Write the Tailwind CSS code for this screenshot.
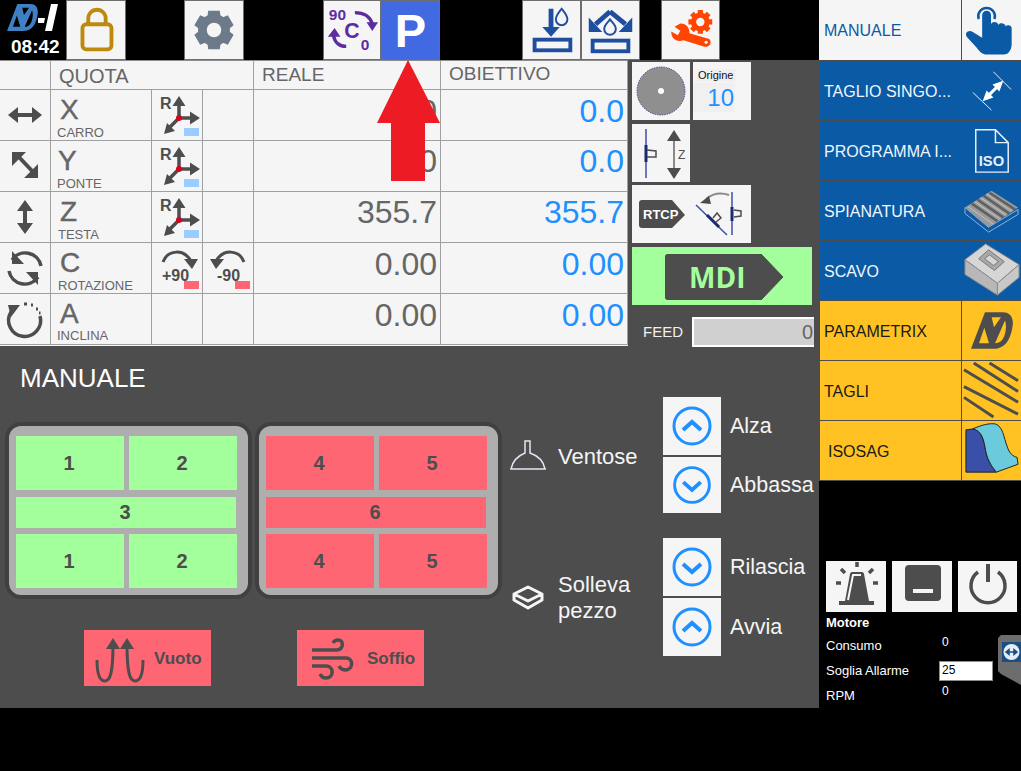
<!DOCTYPE html>
<html lang="it">
<head>
  <meta charset="UTF-8">
  <title>MD-I Manuale</title>
  <script src="https://cdn.jsdelivr.net/npm/@tailwindcss/browser@4"></script>
</head>
<body class="bg-black">
  <svg class="absolute w-0 h-0">
    <symbol id="axes" viewBox="0 0 50 50">
      <path d="M27 28V12M27 28H42M27 28L17 38" stroke="#4d4d4d" stroke-width="3.500" fill="none"/>
      <path d="M27 6l6.500 10H20.500zM48 28l-10 6.500V21.500zM12 44l3-11 8 8z" fill="#4d4d4d"/>
      <circle cx="27" cy="28" r="3" fill="#d9001b"/>
      <rect x="32" y="38" width="15" height="8" fill="#99ccff"/>
    </symbol>
    <symbol id="chev-up" viewBox="0 0 58 58">
      <circle cx="29" cy="29" r="18" fill="none" stroke="#1e90ff" stroke-width="3"/>
      <path d="M20 33l9-8 9 8" fill="none" stroke="#1e90ff" stroke-width="4"/>
    </symbol>
    <symbol id="chev-down" viewBox="0 0 58 58">
      <circle cx="29" cy="29" r="18" fill="none" stroke="#1e90ff" stroke-width="3"/>
      <path d="M20 26l9 8 9-8" fill="none" stroke="#1e90ff" stroke-width="4"/>
    </symbol>
    <symbol id="md-logo" viewBox="32 25 126 110">
      <path fill-rule="evenodd" d="M74 25H128C150 25 160 42 157 65C152 105 135 135 100 135H32ZM56 118L72 72L86 118ZM104 118C120 118 130 108 135 85C138 70 137 58 134 50ZM94 40H122L101 70Z"/>
    </symbol>
  </svg>

  <div class="relative w-[1021px] h-[771px] overflow-hidden bg-black flex font-['Liberation_Sans',sans-serif]">

    <!-- left side -->
    <div class="w-[819px]">

      <!-- top bar -->
      <div class="flex h-[60px]">
        <div class="w-[66px]">
          <div class="flex h-[36px] pl-[7px] pt-[4px]">
            <svg class="w-[31px] h-[27px] fill-[#3f7fc4]"><use href="#md-logo"/></svg>
            <svg class="w-[22px] h-[27px]" viewBox="0 0 22 27">
              <path d="M0 14h7l-1 5H-1zM13 0h7l-6 27H7z" fill="#fff"/>
            </svg>
          </div>
          <div class="text-white font-bold text-[19px] leading-[20px] pl-[11px] mt-[1px]">08:42</div>
        </div>
        <div class="w-[60px] h-[60px] border border-[#6e6e6e] bg-[#f5f5f5]">
          <svg class="w-full h-full" viewBox="0 0 60 60">
            <rect x="16" y="24" width="30" height="26" rx="4" fill="none" stroke="#bd8a0e" stroke-width="4"/>
            <path d="M22 24V18a9 9 0 0 1 18 0V24" fill="none" stroke="#bd8a0e" stroke-width="4"/>
          </svg>
        </div>
        <div class="w-[60px] h-[60px] ml-[58px] border border-[#6e6e6e] bg-[#f5f5f5]">
          <svg class="w-full h-full" viewBox="0 0 60 60">
            <g fill="#6c7a89">
              <path d="M24 10h12l1 8h-14zM24 50h12l1-8h-14z"/>
              <path d="M24 10h12l1 8h-14zM24 50h12l1-8h-14z" transform="rotate(60 30 30)"/>
              <path d="M24 10h12l1 8h-14zM24 50h12l1-8h-14z" transform="rotate(120 30 30)"/>
            </g>
            <circle cx="30" cy="30" r="12" fill="none" stroke="#6c7a89" stroke-width="9"/>
          </svg>
        </div>
        <div class="w-[58px] h-[60px] ml-[79px] border border-[#6e6e6e] bg-[#f5f5f5]">
          <svg class="w-full h-full" viewBox="0 0 58 60">
            <text x="5" y="20" font-size="16" font-weight="700" fill="#5b2d9e" font-family="Liberation Sans">90</text>
            <text x="21" y="38" font-size="22" font-weight="700" fill="#5b2d9e" font-family="Liberation Sans">C</text>
            <text x="38" y="51" font-size="16" font-weight="700" fill="#5b2d9e" font-family="Liberation Sans">0</text>
            <path d="M32 12C41 12 48 16 50 24M23 47C16 47 11 43 10 36" fill="none" stroke="#5b2d9e" stroke-width="3.500"/>
            <path d="M44 22h12l-6 9zM4 37h13l-6-9z" fill="#5b2d9e"/>
          </svg>
        </div>
        <div class="w-[59px] h-[60px] border border-[#6e6e6e] bg-[#4169e1] flex items-center justify-center text-white font-bold text-[47px] leading-none">P</div>
        <div class="w-[59px] h-[60px] ml-[82px] border border-[#6e6e6e] bg-[#f5f5f5]">
          <svg class="w-full h-full" viewBox="0 0 59 60">
            <rect x="12" y="40" width="37" height="11" fill="none" stroke="#1f4e9e" stroke-width="4"/>
            <path d="M29 8V28" stroke="#1f4e9e" stroke-width="5"/>
            <path d="M20 27h18l-9 10z" fill="#1f4e9e"/>
            <path d="M40 8c3 4 6 7 6 11a6 6 0 0 1-12 0c0-4 3-7 6-11z" fill="none" stroke="#1f4e9e" stroke-width="2"/>
          </svg>
        </div>
        <div class="w-[59px] h-[60px] border border-[#6e6e6e] bg-[#f5f5f5]">
          <svg class="w-full h-full" viewBox="0 0 59 60">
            <rect x="11" y="41" width="37" height="11" fill="none" stroke="#1f4e9e" stroke-width="4"/>
            <path d="M29 11L14 24M29 11L45 24" fill="none" stroke="#1f4e9e" stroke-width="5"/>
            <path d="M7 17V32H21zM52 17V32H38z" fill="#1f4e9e"/>
            <path d="M29 19c3 4 6 6 6 10a6 6 0 0 1-12 0c0-4 3-6 6-10z" fill="none" stroke="#1f4e9e" stroke-width="2"/>
          </svg>
        </div>
        <div class="w-[59px] h-[60px] ml-[21px] border border-[#6e6e6e] bg-[#f5f5f5]">
          <svg class="w-full h-full" viewBox="3 0 177 180">
            <path d="M60 70L42 80L60 92L52 106L32 95C30 115 48 130 70 122L135 142C150 145 160 130 150 118L88 100C90 82 75 68 60 70Z" fill="#ff4500"/>
            <circle cx="140" cy="128" r="5" fill="#f5f5f5"/>
            <g fill="#ff4500">
              <path d="M114 28h16v14h-16zM114 102h16v-14h-16z"/>
              <path d="M114 28h16v14h-16zM114 102h16v-14h-16z" transform="rotate(45 122 65)"/>
              <path d="M114 28h16v14h-16zM114 102h16v-14h-16z" transform="rotate(90 122 65)"/>
              <path d="M114 28h16v14h-16zM114 102h16v-14h-16z" transform="rotate(135 122 65)"/>
            </g>
            <circle cx="122" cy="65" r="21" fill="none" stroke="#ff4500" stroke-width="16"/>
          </svg>
        </div>
      </div>

      <!-- main -->
      <div class="bg-[#4d4d4d] h-[648px]">
        <div class="flex h-[286px]">

          <!-- axes table -->
          <div class="w-[628px] h-[286px] border-t border-[#8c8c8c] bg-[#f5f5f5] grid grid-cols-[51px_101px_51px_51px_187px_187px] grid-rows-[29px_51px_51px_51px_51px_51px] text-[#666666] [&>div]:border-r [&>div]:border-b [&>div]:border-[#a0a0a0]">
            <div></div>
            <div class="col-span-3 text-[20px] leading-[29px] pl-[8px] pt-[1px]">QUOTA</div>
            <div class="text-[19px] leading-[27px] pl-[8px]">REALE</div>
            <div class="text-[19px] leading-[25px] pl-[8px]">OBIETTIVO</div>

            <div class="flex items-center justify-center">
              <svg class="w-[50px] h-[50px]" viewBox="0 0 50 50"><path d="M15 23h20v4H15z" fill="#4d4d4d"/><path d="M8 25l10-8v16zM42 25l-10-8v16z" fill="#4d4d4d"/></svg>
            </div>
            <div class="pl-[9px] pt-[6px]"><div class="text-[28px] leading-[28px] [-webkit-text-stroke:0.4px_#666666]">X</div><div class="text-[13px] leading-[14px] mt-[2px] -ml-[3px]">CARRO</div></div>
            <div>
              <svg class="w-[50px] h-[50px]" viewBox="0 0 50 50">
                <use href="#axes" width="50" height="50"/>
                <text x="8" y="19" font-size="16" font-weight="700" fill="#4d4d4d" font-family="Liberation Sans">R</text>
              </svg>
            </div>
            <div></div>
            <div class="text-right text-[32px] leading-[42px] pr-[3px]">0.0</div>
            <div class="text-right text-[32px] leading-[42px] pr-[3px] text-[#1e90ff]">0.0</div>

            <div class="flex items-center justify-center">
              <svg class="w-[50px] h-[50px]" viewBox="0 0 50 50"><path d="M18 15L34 32" stroke="#4d4d4d" stroke-width="4"/><path d="M12 11h14L12 25zM38 37H24l14-14z" fill="#4d4d4d"/></svg>
            </div>
            <div class="pl-[7px] pt-[6px]"><div class="text-[28px] leading-[28px] [-webkit-text-stroke:0.4px_#666666]">Y</div><div class="text-[13px] leading-[14px] mt-[2px] -ml-[1px]">PONTE</div></div>
            <div>
              <svg class="w-[50px] h-[50px]" viewBox="0 0 50 50">
                <use href="#axes" width="50" height="50"/>
                <text x="8" y="19" font-size="16" font-weight="700" fill="#4d4d4d" font-family="Liberation Sans">R</text>
              </svg>
            </div>
            <div></div>
            <div class="text-right text-[32px] leading-[41px] pr-[3px]">0.0</div>
            <div class="text-right text-[32px] leading-[41px] pr-[3px] text-[#1e90ff]">0.0</div>

            <div class="flex items-center justify-center">
              <svg class="w-[50px] h-[50px]" viewBox="0 0 50 50"><path d="M23 15h4v20h-4z" fill="#4d4d4d"/><path d="M25 8l8 11H17zM25 42l8-11H17z" fill="#4d4d4d"/></svg>
            </div>
            <div class="pl-[9px] pt-[6px]"><div class="text-[28px] leading-[28px] [-webkit-text-stroke:0.4px_#666666]">Z</div><div class="text-[13px] leading-[14px] mt-[2px] -ml-[2px]">TESTA</div></div>
            <div>
              <svg class="w-[50px] h-[50px]" viewBox="0 0 50 50">
                <use href="#axes" width="50" height="50"/>
                <text x="8" y="19" font-size="16" font-weight="700" fill="#4d4d4d" font-family="Liberation Sans">R</text>
              </svg>
            </div>
            <div></div>
            <div class="text-right text-[32px] leading-[40px] pr-[3px]">355.7</div>
            <div class="text-right text-[32px] leading-[40px] pr-[3px] text-[#1e90ff]">355.7</div>

            <div class="flex items-center justify-center">
              <svg class="w-[50px] h-[50px]" viewBox="0 0 50 50">
                <path d="M12 17A16 16 0 0 1 41 23M38 34A16 16 0 0 1 9 28" fill="none" stroke="#4d4d4d" stroke-width="3.500"/>
                <path d="M12 8v13h12zM38 42V29H26z" fill="#4d4d4d"/>
              </svg>
            </div>
            <div class="pl-[9px] pt-[6px]"><div class="text-[28px] leading-[28px] [-webkit-text-stroke:0.4px_#666666]">C</div><div class="text-[13px] leading-[14px] mt-[2px] -ml-[2px]">ROTAZIONE</div></div>
            <div>
              <svg class="w-[50px] h-[50px]" viewBox="0 0 50 50">
                <path d="M11 19C16 6 32 6 39 18" fill="none" stroke="#4d4d4d" stroke-width="3"/>
                <path d="M32 16h14l-6 10z" fill="#4d4d4d"/>
                <text x="10" y="38" font-size="16" font-weight="700" fill="#4d4d4d" font-family="Liberation Sans">+90</text>
                <rect x="32" y="38" width="15" height="8" fill="#ff6673"/>
              </svg>
            </div>
            <div>
              <svg class="w-[50px] h-[50px]" viewBox="0 0 50 50">
                <path d="M41 19C36 6 20 6 13 18" fill="none" stroke="#4d4d4d" stroke-width="3"/>
                <path d="M7 16h14l-8 10z" fill="#4d4d4d"/>
                <text x="14" y="38" font-size="16" font-weight="700" fill="#4d4d4d" font-family="Liberation Sans">-90</text>
                <rect x="32" y="38" width="15" height="8" fill="#ff6673"/>
              </svg>
            </div>
            <div class="text-right text-[32px] leading-[42px] pr-[3px]">0.00</div>
            <div class="text-right text-[32px] leading-[42px] pr-[3px] text-[#1e90ff]">0.00</div>

            <div class="flex items-center justify-center">
              <svg class="w-[50px] h-[50px]" viewBox="0 0 50 50">
                <path d="M11 18A16 16 0 1 0 40 22" fill="none" stroke="#4d4d4d" stroke-width="3.500"/>
                <path d="M8 11h12L11 23z" fill="#4d4d4d"/>
                <path d="M24 10h3M31 11h2M36 15h2M39 19h1.500" stroke="#4d4d4d" stroke-width="3" fill="none"/>
              </svg>
            </div>
            <div class="pl-[9px] pt-[6px]"><div class="text-[28px] leading-[28px] [-webkit-text-stroke:0.4px_#666666]">A</div><div class="text-[13px] leading-[14px] mt-[1px] -ml-[3px]">INCLINA</div></div>
            <div></div>
            <div></div>
            <div class="text-right text-[32px] leading-[42px] pr-[3px]">0.00</div>
            <div class="text-right text-[32px] leading-[42px] pr-[3px] text-[#1e90ff]">0.00</div>
          </div>

          <!-- side tools -->
          <div class="w-[191px] pl-[4px] pt-[2px]">
            <div class="flex gap-[3px]">
              <div class="w-[58px] h-[58px] bg-[#f5f5f5] flex items-center justify-center">
                <svg class="w-[50px] h-[50px]" viewBox="0 0 50 50">
                  <circle cx="25" cy="25" r="24" fill="#8f8f8f"/>
                  <circle cx="25" cy="25" r="24" fill="none" stroke="#2b2b8f" stroke-width="0.800" stroke-dasharray="1.500 1"/>
                  <circle cx="25" cy="25" r="3" fill="#fff"/>
                </svg>
              </div>
              <div class="w-[58px] h-[58px] bg-[#f5f5f5] pt-[7px]">
                <div class="text-[11px] leading-[13px] text-[#111111] bg-[#f0f0f0] w-[39px] ml-[4px] pl-[1px]">Origine</div>
                <div class="text-[24px] leading-[29px] text-[#1e90ff] bg-[#f0f0f0] w-[42px] text-right pr-[1px] mt-[1px]">10</div>
              </div>
            </div>
            <div class="w-[58px] h-[58px] bg-[#f5f5f5] mt-[4px]">
              <svg class="w-full h-full" viewBox="0 0 58 58">
                <path d="M14 5V54" stroke="#3a4fa8" stroke-width="1.500"/>
                <path d="M14 21V38" stroke="#1c2a70" stroke-width="3"/>
                <path d="M15 26L24 27V33L15 33" fill="none" stroke="#4d4d4d" stroke-width="1.500"/>
                <path d="M42 14V48" stroke="#8a8a8a" stroke-width="2"/>
                <path d="M42 6l7 11H35zM42 55l7-11H35z" fill="#4d4d4d"/>
                <text x="46" y="35" font-size="12" fill="#4d4d4d" font-family="Liberation Sans">Z</text>
              </svg>
            </div>
            <div class="w-[119px] h-[58px] bg-[#f5f5f5] mt-[3px]">
              <svg class="w-full h-full" viewBox="0 0 119 58">
                <path d="M7 18a3 3 0 0 1 3-3H40L53 30 40 43H10a3 3 0 0 1-3-3z" fill="#4d4d4d"/>
                <text x="11" y="34" font-size="13" font-weight="700" fill="#fff" font-family="Liberation Sans">RTCP</text>
                <path d="M64 20L95 50" stroke="#3a4fa8" stroke-width="1.500"/>
                <path d="M75 30L87 42" stroke="#1c2a70" stroke-width="3"/>
                <path d="M81 33L85 28L89 33L84 37" fill="none" stroke="#4d4d4d" stroke-width="1.500"/>
                <path d="M100 7V50" stroke="#3a4fa8" stroke-width="1.500"/>
                <path d="M100 22V36" stroke="#1c2a70" stroke-width="3"/>
                <path d="M102 25L109 26V31L102 32" fill="none" stroke="#4d4d4d" stroke-width="1.500"/>
                <path d="M97 10C88 7 80 9 74 14" fill="none" stroke="#8a8a8a" stroke-width="2"/>
                <path d="M68 18L77 11L79 19z" fill="#4d4d4d"/>
              </svg>
            </div>
            <div class="w-[180px] h-[58px] bg-[#a3ff9b] mt-[4px] pl-[33px] pt-[7px]">
              <div class="relative w-[118px] h-[46px]">
                <svg class="absolute inset-0 w-full h-full" viewBox="0 0 118 46">
                  <path d="M0 4a4 4 0 0 1 4-4H96L118 23 96 46H4a4 4 0 0 1-4-4z" fill="#4d4d4d" stroke="#4d4d4d" stroke-linejoin="round"/>
                </svg>
                <div class="relative text-[#a3ff9b] font-['Open_Sans',sans-serif] font-bold text-[28px] leading-[46px] pl-[24px]">MDI</div>
              </div>
            </div>
            <div class="flex items-center mt-[12px] h-[30px]">
              <div class="w-[60px] pl-[11px] text-[15px] text-[#f0f0f0]">FEED</div>
              <div class="w-[122px] h-[30px] bg-[#d0d0d0] border-y-2 border-l-2 border-white text-right text-[20px] leading-[26px] text-[#666666] pr-[1px]">0</div>
            </div>
          </div>
        </div>

        <!-- manuale section -->
        <div class="flex">
          <div class="w-[510px] pl-[5px]">
            <div class="h-[76px] pl-[15px] pt-[17px] text-[26px] leading-[30px] text-white">MANUALE</div>
            <div class="flex gap-[3px]">
              <div class="w-[247px] h-[177px] rounded-[16px] border-4 border-[#404040] bg-[#aeaeae] pl-[7px] pt-[10px] grid grid-cols-[108px_108px] grid-rows-[54px_31px_54px] gap-x-[5px] gap-y-[6.500px] content-start text-[#4d4d4d] font-bold text-[20px]">
                <div class="bg-[#a3ff9b] flex items-center justify-center pr-[2px]">1</div>
                <div class="bg-[#a3ff9b] flex items-center justify-center pr-[2px]">2</div>
                <div class="bg-[#a3ff9b] col-span-2 w-[220px] flex items-center justify-center pr-[2px]">3</div>
                <div class="bg-[#a3ff9b] flex items-center justify-center pr-[2px]">1</div>
                <div class="bg-[#a3ff9b] flex items-center justify-center pr-[2px]">2</div>
              </div>
              <div class="w-[247px] h-[177px] rounded-[16px] border-4 border-[#404040] bg-[#aeaeae] pl-[7px] pt-[10px] grid grid-cols-[108px_108px] grid-rows-[54px_31px_54px] gap-x-[5px] gap-y-[6.500px] content-start text-[#4d4d4d] font-bold text-[20px]">
                <div class="bg-[#ff6673] flex items-center justify-center pr-[2px]">4</div>
                <div class="bg-[#ff6673] flex items-center justify-center pr-[2px]">5</div>
                <div class="bg-[#ff6673] col-span-2 w-[220px] flex items-center justify-center pr-[2px]">6</div>
                <div class="bg-[#ff6673] flex items-center justify-center pr-[2px]">4</div>
                <div class="bg-[#ff6673] flex items-center justify-center pr-[2px]">5</div>
              </div>
            </div>
            <div class="flex mt-[31px] ml-[79px] gap-[86px]">
              <div class="w-[127px] h-[56px] bg-[#ff6673] flex items-center">
                <svg class="w-[70px] h-[56px] shrink-0" viewBox="0 0 70 56">
                  <path d="M13 30C13 44 16 51 21 51C26 51 29 44 29 14M59 30C59 44 56 51 51 51C46 51 43 44 43 14" fill="none" stroke="#4d4d4d" stroke-width="3"/>
                  <path d="M29 8l7 11H22zM43 8l7 11H36z" fill="#4d4d4d"/>
                </svg>
                <span class="text-[17px] font-bold text-[#4d4d4d] pt-[1px]">Vuoto</span>
              </div>
              <div class="w-[127px] h-[56px] bg-[#ff6673] flex items-center">
                <svg class="w-[70px] h-[56px] shrink-0" viewBox="0 0 70 56">
                  <path d="M15 20H40C47 19 47 10 41 10C38 10 37 11 36 13M15 28H49C56 28 57 39 49 40C45 40 43 38 42 36M15 36H30C37 37 37 48 29 48C26 48 24 46 23 44" fill="none" stroke="#4d4d4d" stroke-width="3.500"/>
                </svg>
                <span class="text-[17px] font-bold text-[#4d4d4d] pt-[1px]">Soffio</span>
              </div>
            </div>
          </div>

          <div class="pt-[51px] text-[21.500px] text-[#f5f5f5]">
            <div class="flex items-center h-[116px]">
              <svg class="w-[48px] h-[36px] shrink-0" viewBox="0 0 48 36">
                <path d="M1 32H36M1 32C3 22 10 18 15 16V4H20V16C26 18 33 22 35 32Z" fill="none" stroke="#e8e4f4" stroke-width="1.500"/>
              </svg>
              <span class="w-[105px] text-[22px] pt-[3px]">Ventose</span>
              <div>
                <div class="flex items-center h-[58px] mb-[2px]">
                  <svg class="w-[58px] h-[58px] bg-[#f5f5f5]"><use href="#chev-up"/></svg>
                  <span class="ml-[9px] pt-[1px]">Alza</span>
                </div>
                <div class="flex items-center h-[56px]">
                  <svg class="w-[58px] h-[56px] bg-[#f5f5f5]"><use href="#chev-down"/></svg>
                  <span class="ml-[9px] pt-[1px]">Abbassa</span>
                </div>
              </div>
            </div>
            <div class="flex items-center h-[118px] mt-[25px]">
              <svg class="w-[48px] h-[36px] shrink-0" viewBox="0 0 48 36">
                <path d="M4 15L18 8L32 15L18 22ZM4 15V21L18 29L32 21V15" fill="none" stroke="#f5f5f5" stroke-width="3" stroke-linejoin="round"/>
              </svg>
              <span class="w-[105px] text-[22px] leading-[26px] pt-[1px]">Solleva<br>pezzo</span>
              <div>
                <div class="flex items-center h-[58px] mb-[2px]">
                  <svg class="w-[58px] h-[58px] bg-[#f5f5f5]"><use href="#chev-down"/></svg>
                  <span class="ml-[9px] pt-[1px]">Rilascia</span>
                </div>
                <div class="flex items-center h-[58px]">
                  <svg class="w-[58px] h-[58px] bg-[#f5f5f5]"><use href="#chev-up"/></svg>
                  <span class="ml-[9px] pt-[1px]">Avvia</span>
                </div>
              </div>
            </div>
          </div>
        </div>
      </div>
    </div>

    <!-- right side -->
    <div class="w-[202px] text-[16px]">
      <div class="flex h-[61px] bg-[#f5f5f5] border-b border-[#4d4d4d] text-[#0b5aa5]">
        <div class="w-[143px] border-r border-[#4d4d4d] pl-[5px] leading-[62px]">MANUALE</div>
        <svg class="w-[59px] h-[60px]" viewBox="0 0 60 60">
          <path d="M17 19A8.500 8.500 0 1 1 33 19" fill="none" stroke="#0b5aa5" stroke-width="2.500"/>
          <path d="M20.500 15a4.500 4.500 0 0 1 9 0V24c1-3 7-3 7.500 1c1-3 7-2 7.500 1.500c1-2 6-2 6 2V44c0 6-3 11-8 11H25c-4 0-7-3-10-7L5 37c-3-4 2-8 6-5L20.500 38Z" fill="#0b5aa5"/>
        </svg>
      </div>

      <div class="flex h-[60px] bg-[#0b5aa5] border-l border-b border-[#4d4d4d] text-[#f0f6fb]">
        <div class="w-[142px] border-r border-[#4d4d4d] pl-[4px] leading-[62px]">TAGLIO SINGO...</div>
        <svg class="w-[59px] h-[59px]" viewBox="0 0 60 60">
          <path d="M32 11L50 29M11 32L30 50" stroke="#e8f0f8" stroke-width="1"/>
          <path d="M25 37L38 24" stroke="#fff" stroke-width="3"/>
          <path d="M42 20L38 31L31 24zM21 41L25 30L32 37z" fill="#fff"/>
        </svg>
      </div>
      <div class="flex h-[60px] bg-[#0b5aa5] border-l border-b border-[#4d4d4d] text-[#f0f6fb]">
        <div class="w-[142px] border-r border-[#4d4d4d] pl-[4px] leading-[62px]">PROGRAMMA I...</div>
        <svg class="w-[59px] h-[59px]" viewBox="0 0 60 60">
          <path d="M14 9H34L47 22V52H14ZM34 9V22H47" fill="none" stroke="#e8f0f8" stroke-width="1.500"/>
          <text x="17" y="46" font-size="15" font-weight="700" fill="#e8f0f8" font-family="Liberation Sans">ISO</text>
        </svg>
      </div>
      <div class="flex h-[60px] bg-[#0b5aa5] border-l border-b border-[#4d4d4d] text-[#f0f6fb]">
        <div class="w-[142px] border-r border-[#4d4d4d] pl-[4px] leading-[62px]">SPIANATURA</div>
        <svg class="w-[59px] h-[59px]" viewBox="0 0 60 60">
          <path d="M3 27L27 47L57 29V34L27 52L3 33Z" fill="none" stroke="#8fb4d8" stroke-width="1"/>
          <path d="M3 27L30 10L57 27L27 47Z" fill="#9a9a9a"/>
          <path d="M10 23L36 41M16 19L42 37M22 15L48 33M28 12L54 29" stroke="#5f5f5f" stroke-width="2.500"/>
          <path d="M6 26L32 44M13 21L39 39M19 17L45 35M25 13L51 31" stroke="#c4c4c4" stroke-width="1"/>
        </svg>
      </div>
      <div class="flex h-[60px] bg-[#0b5aa5] border-l border-b border-[#4d4d4d] text-[#f0f6fb]">
        <div class="w-[142px] border-r border-[#4d4d4d] pl-[4px] leading-[62px]">SCAVO</div>
        <svg class="w-[59px] h-[59px]" viewBox="0 0 60 60">
          <path d="M3 19L24 3L58 24L36 43Z" fill="#d6d6d6" stroke="#8a8a8a"/>
          <path d="M3 19V34L36 55V43Z" fill="#b8b8b8" stroke="#8a8a8a"/>
          <path d="M36 43L58 24V37L36 55Z" fill="#c8c8c8" stroke="#8a8a8a"/>
          <path d="M17 18L27 9L43 21L33 30Z" fill="#a8a8a8" stroke="#777777"/>
          <path d="M23 18L28 14L37 21L32 25Z" fill="#d6d6d6" stroke="#777777"/>
        </svg>
      </div>

      <div class="flex h-[60px] bg-[#ffc222] border-l border-b border-[#4d4d4d] text-[#1a1a1a]">
        <div class="w-[142px] border-r border-[#4d4d4d] pl-[4px] leading-[62px]">PARAMETRIX</div>
        <svg class="w-[59px] h-[59px] fill-[#4d4d4d] pl-[9px] pr-[8px] py-[8px]"><use href="#md-logo"/></svg>
      </div>
      <div class="flex h-[60px] bg-[#ffc222] border-l border-b border-[#4d4d4d] text-[#1a1a1a]">
        <div class="w-[142px] border-r border-[#4d4d4d] pl-[4px] leading-[62px]">TAGLI</div>
        <svg class="w-[59px] h-[59px]" viewBox="0 0 60 60">
          <path d="M12 2L57 31M28 2L57 20M2 9L57 42M2 26L57 54M2 37L32 57" stroke="#4d4d4d" stroke-width="3" fill="none"/>
        </svg>
      </div>
      <div class="flex h-[60px] bg-[#ffc222] border-l border-b border-[#4d4d4d] text-[#1a1a1a]">
        <div class="w-[142px] border-r border-[#4d4d4d] pl-[8px] leading-[62px]">ISOSAG</div>
        <svg class="w-[59px] h-[59px]" viewBox="0 0 60 60">
          <path d="M4 9L12 8C20 10 22 18 24 30C26 40 30 46 35 52H4Z" fill="#3a50a8" stroke="#222222" stroke-width="1"/>
          <path d="M11 8C20 4 28 2 34 3C42 6 42 16 46 26C48 33 52 36 56 37L57 44L35 52C30 46 26 40 24 30C22 18 20 10 11 8Z" fill="#6bcadc" stroke="#222222" stroke-width="1"/>
        </svg>
      </div>

      <!-- bottom buttons and motor values -->
      <div class="pl-[7px] pt-[80px] text-white">
        <div class="flex gap-[6px]">
          <div class="w-[60px] h-[51px] bg-[#f5f5f5]">
            <svg class="w-full h-full" viewBox="0 0 60 51">
              <path d="M13 40H48V44H13ZM19 40L24 13C24 12 25 11 26 11H36C37 11 38 12 38 13L43 40Z" fill="#4d4d4d"/>
              <path d="M22 39L27 14H35" fill="none" stroke="#f5f5f5" stroke-width="2"/>
              <path d="M31 1V6M10 22H15M47 22H52M15 8L19 12M47 8L43 12" stroke="#4d4d4d" stroke-width="3.500"/>
            </svg>
          </div>
          <div class="w-[60px] h-[51px] bg-[#f5f5f5]">
            <svg class="w-full h-full" viewBox="0 0 60 51">
              <rect x="13" y="4" width="36" height="36" rx="4" fill="#4d4d4d"/>
              <rect x="21" y="28" width="20" height="4" fill="#f5f5f5"/>
            </svg>
          </div>
          <div class="w-[59px] h-[51px] bg-[#f5f5f5]">
            <svg class="w-full h-full" viewBox="0 0 59 51">
              <path d="M20 11A17 17 0 1 0 40 11" fill="none" stroke="#4d4d4d" stroke-width="3.500"/>
              <path d="M30 3V21" stroke="#4d4d4d" stroke-width="4"/>
            </svg>
          </div>
        </div>
        <div class="text-[13px] font-bold leading-[20px] mt-[1px]">Motore</div>
        <div class="text-[13px]">
          <div class="flex items-center h-[25px]"><span class="w-[113px]">Consumo</span><span class="pl-[3px] text-[12px] -mt-[8px]">0</span></div>
          <div class="flex items-center h-[25px]"><span class="w-[113px]">Soglia Allarme</span><span class="w-[54px] h-[20px] bg-white border border-[#8c8c8c] text-black text-[12px] leading-[16px] pl-[2px]">25</span></div>
          <div class="flex items-center h-[26px]"><span class="w-[113px]">RPM</span><span class="pl-[3px] text-[12px] -mt-[10px]">0</span></div>
        </div>
      </div>
    </div>

    <!-- red arrow over the P button -->
    <svg class="absolute left-[377px] top-[60px] w-[64px] h-[122px]" viewBox="0 0 64 122">
      <path d="M31 0L63 63H48V121H14V63H0Z" fill="#ed1c24"/>
    </svg>

    <!-- remote support tab -->
    <div class="absolute left-[998px] top-[635px]">
      <svg class="w-[23px] h-[50px]" viewBox="0 0 23 50">
        <path d="M3 0H23V50L3 39L0 36V3Z" fill="#6d6d6d"/>
        <rect x="4" y="7" width="19" height="20" fill="#1a4f86"/>
        <circle cx="13.500" cy="17" r="8" fill="#e6edf4"/>
        <path d="M8 17H19M8 17l3-2.500v5zM19 17l-3-2.500v5z" stroke="#1a4f86" stroke-width="1.500" fill="#1a4f86"/>
      </svg>
    </div>
  </div>
</body>
</html>
